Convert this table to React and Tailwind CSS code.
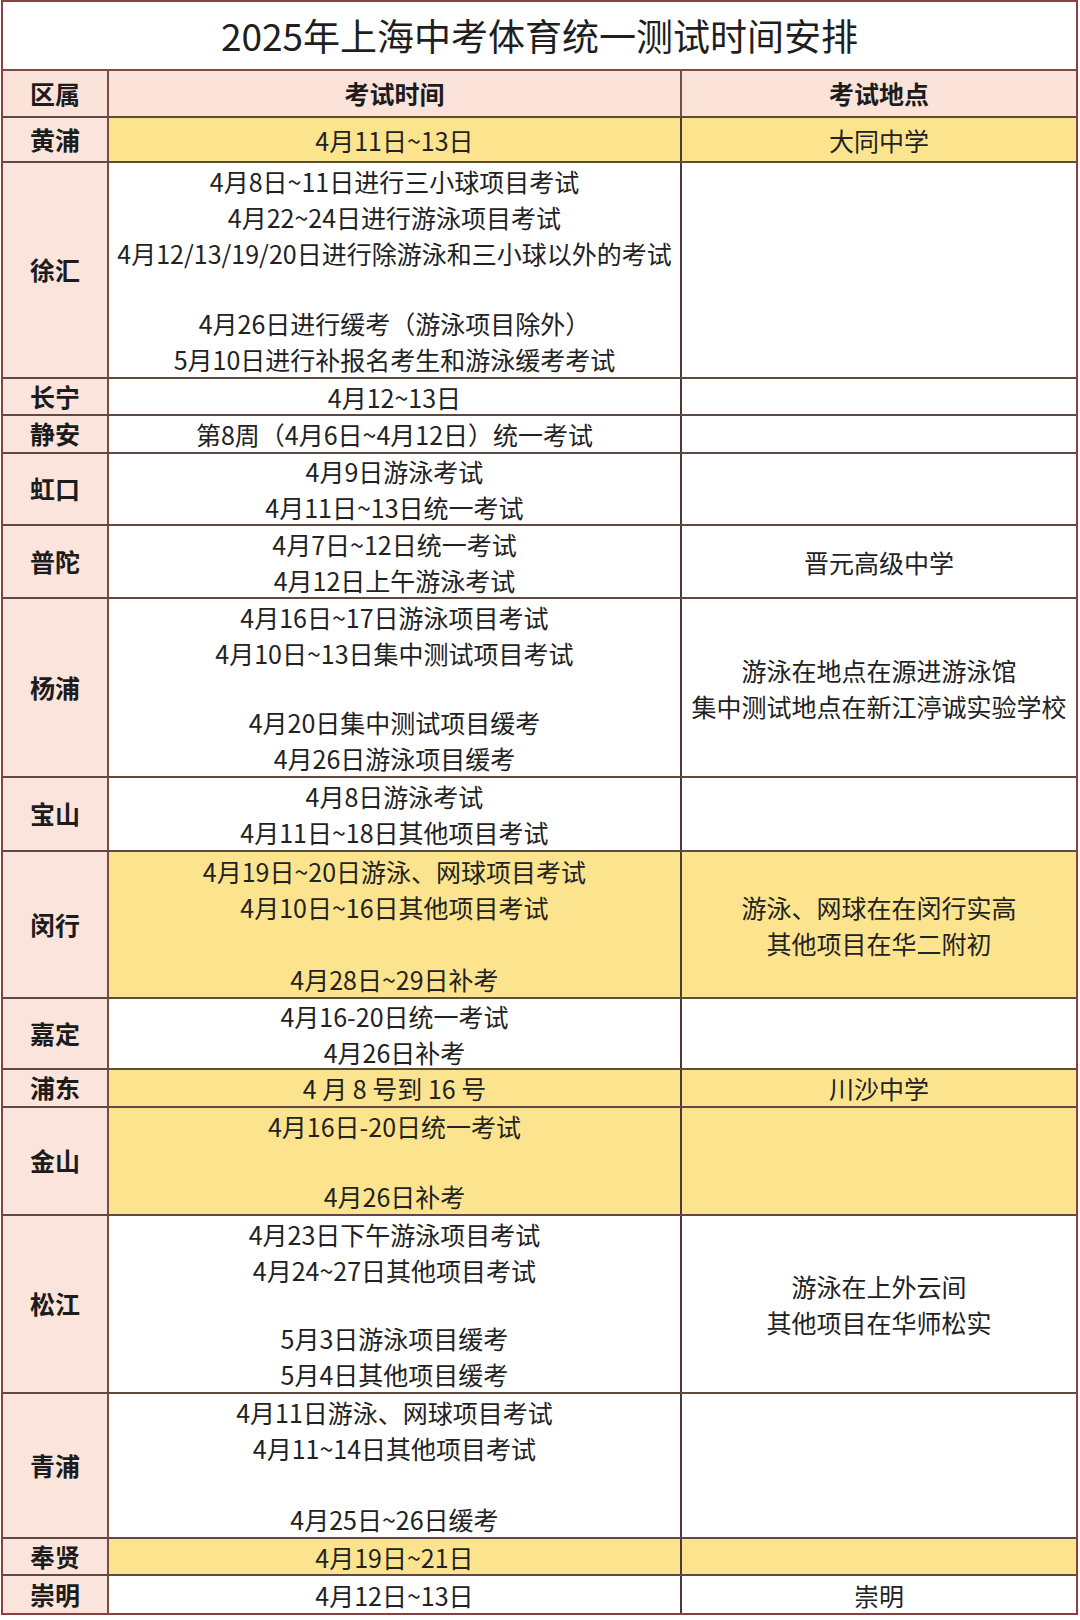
const rows = [
  { area: "黄浦", h: "h-[45px]", yellow: true, time: ["4月11日~13日"], place: ["大同中学"] },
  {
    area: "徐汇",
    h: "h-[216px]",
    time: [
      "4月8日~11日进行三小球项目考试",
      "4月22~24日进行游泳项目考试",
      "4月12/13/19/20日进行除游泳和三小球以外的考试",
      "",
      "4月26日进行缓考（游泳项目除外）",
      "5月10日进行补报名考生和游泳缓考考试",
    ],
    place: [],
  },
  { area: "长宁", h: "h-[37px]", time: ["4月12~13日"], place: [] },
  { area: "静安", h: "h-[38px]", time: ["第8周（4月6日~4月12日）统一考试"], place: [] },
  { area: "虹口", h: "h-[72px]", time: ["4月9日游泳考试", "4月11日~13日统一考试"], place: [] },
  { area: "普陀", h: "h-[73px]", time: ["4月7日~12日统一考试", "4月12日上午游泳考试"], place: ["晋元高级中学"] },
  {
    area: "杨浦",
    h: "h-[179px]",
    time: ["4月16日~17日游泳项目考试", "4月10日~13日集中测试项目考试", "", "4月20日集中测试项目缓考", "4月26日游泳项目缓考"],
    place: ["游泳在地点在源进游泳馆", "集中测试地点在新江渟诚实验学校"],
  },
  { area: "宝山", h: "h-[74px]", time: ["4月8日游泳考试", "4月11日~18日其他项目考试"], place: [] },
  {
    area: "闵行",
    h: "h-[147px]",
    yellow: true,
    time: ["4月19日~20日游泳、网球项目考试", "4月10日~16日其他项目考试", "", "4月28日~29日补考"],
    place: ["游泳、网球在在闵行实高", "其他项目在华二附初"],
  },
  { area: "嘉定", h: "h-[71px]", time: ["4月16-20日统一考试", "4月26日补考"], place: [] },
  { area: "浦东", h: "h-[38px]", yellow: true, time: ["4 月 8 号到 16 号"], place: ["川沙中学"] },
  { area: "金山", h: "h-[108px]", yellow: true, time: ["4月16日-20日统一考试", "", "4月26日补考"], place: [] },
  {
    area: "松江",
    h: "h-[178px]",
    time: ["4月23日下午游泳项目考试", "4月24~27日其他项目考试", "", "5月3日游泳项目缓考", "5月4日其他项目缓考"],
    place: ["游泳在上外云间", "其他项目在华师松实"],
  },
  {
    area: "青浦",
    h: "h-[145px]",
    time: ["4月11日游泳、网球项目考试", "4月11~14日其他项目考试", "", "4月25日~26日缓考"],
    place: [],
  },
  { area: "奉贤", h: "h-[37px]", yellow: true, time: ["4月19日~21日"], place: [] },
  { area: "崇明", h: "h-[37px]", last: true, time: ["4月12日~13日"], place: ["崇明"] },
];

const font = { fontFamily: '"Noto Sans CJK SC", "Noto Sans", sans-serif' };

function Row({ row }) {
  const bg = row.yellow ? "bg-[#fce48f]" : "bg-white";
  return (
    <div className={`flex ${row.h} ${row.last ? "" : "border-b-2 border-[#5e4a40]"}`}>
      <div className="w-[106px] shrink-0 flex items-center justify-center bg-[#fbe4dc] border-r-2 border-[#7a4a45] font-bold text-[25px] text-[#1c1c1c]">
        {row.area}
      </div>
      <div className={`w-[573px] shrink-0 flex flex-col items-center justify-center ${bg} border-r-2 border-[#4e3a32] text-[25px] leading-[36px] text-[#222]`}>
        {row.time.map((t, i) => (
          <div key={i} className="h-[36px] whitespace-nowrap">
            {t}
          </div>
        ))}
      </div>
      <div className={`flex-1 flex flex-col items-center justify-center ${bg} text-[25px] leading-[36px] text-[#222]`}>
        {row.place.map((p, i) => (
          <div key={i} className="whitespace-nowrap">
            {p}
          </div>
        ))}
      </div>
    </div>
  );
}

export default function App() {
  return (
    <div className="w-[1080px] h-[1620px] bg-white" style={font}>
      <div className="ml-px w-[1077px] border-2 border-[#8a4040]">
        <div className="h-[69px] flex items-center justify-center border-b-2 border-[#7a4a45] text-[37px] text-[#1f1f1f]">
          2025年上海中考体育统一测试时间安排
        </div>
        <div className="flex h-[47px] border-b-2 border-[#5e4a40] bg-[#fbe3d9] font-bold text-[25px] text-[#1c1c1c]">
          <div className="w-[106px] shrink-0 flex items-center justify-center border-r-2 border-[#7a4a45]">区属</div>
          <div className="w-[573px] shrink-0 flex items-center justify-center border-r-2 border-[#7a4a45]">考试时间</div>
          <div className="flex-1 flex items-center justify-center">考试地点</div>
        </div>
        {rows.map((r) => (
          <Row key={r.area} row={r} />
        ))}
      </div>
    </div>
  );
}
